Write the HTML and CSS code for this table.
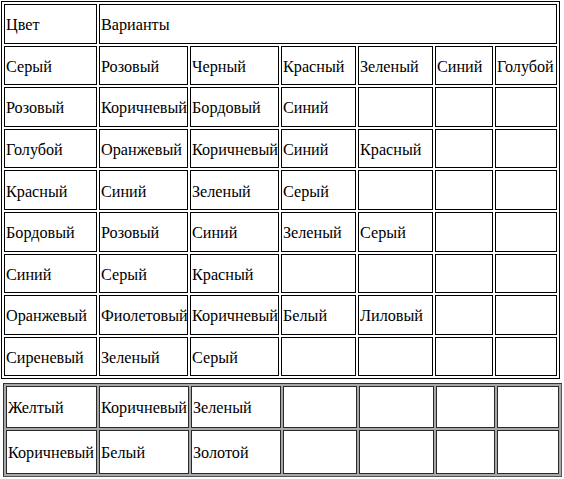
FILE: index.html
```html
<!DOCTYPE html>
<html lang="ru">
<head>
<meta charset="utf-8">
<link rel="stylesheet" href="styles.css">
</head>
<body>
<table class="grid main">
  <colgroup>
    <col class="c1"><col class="c2"><col class="c3"><col class="c4"><col class="c5"><col class="c6"><col class="c7">
  </colgroup>
  <tr><td>Цвет</td><td colspan="6">Варианты</td></tr>
  <tr><td>Серый</td><td>Розовый</td><td>Черный</td><td>Красный</td><td>Зеленый</td><td>Синий</td><td>Голубой</td></tr>
  <tr><td>Розовый</td><td>Коричневый</td><td>Бордовый</td><td>Синий</td><td></td><td></td><td></td></tr>
  <tr><td>Голубой</td><td>Оранжевый</td><td>Коричневый</td><td>Синий</td><td>Красный</td><td></td><td></td></tr>
  <tr><td>Красный</td><td>Синий</td><td>Зеленый</td><td>Серый</td><td></td><td></td><td></td></tr>
  <tr><td>Бордовый</td><td>Розовый</td><td>Синий</td><td>Зеленый</td><td>Серый</td><td></td><td></td></tr>
  <tr><td>Синий</td><td>Серый</td><td>Красный</td><td></td><td></td><td></td><td></td></tr>
  <tr><td>Оранжевый</td><td>Фиолетовый</td><td>Коричневый</td><td>Белый</td><td>Лиловый</td><td></td><td></td></tr>
  <tr><td>Сиреневый</td><td>Зеленый</td><td>Серый</td><td></td><td></td><td></td><td></td></tr>
</table>
<table class="grid extra">
  <colgroup>
    <col class="d1"><col class="d2"><col class="d3"><col class="d4"><col class="d5"><col class="d6"><col class="d7">
  </colgroup>
  <tr class="r1"><td>Желтый</td><td>Коричневый</td><td>Зеленый</td><td></td><td></td><td></td><td></td></tr>
  <tr class="r2"><td>Коричневый</td><td>Белый</td><td>Золотой</td><td></td><td></td><td></td><td></td></tr>
</table>
</body>
</html>
```
FILE: styles.css
```css
html, body {
  margin: 0;
  padding: 0;
  background: #fff;
}
body {
  font-family: "Liberation Serif", "Times New Roman", serif;
  font-size: 16.2px;
  color: #000;
}
.grid {
  table-layout: fixed;
  border-collapse: separate;
  border-spacing: 2px;
}
.grid td {
  font-family: "Liberation Serif", "Times New Roman", serif;
  font-size: 16.2px;
  padding: 4px 0 0 1px;
  white-space: nowrap;
  overflow: visible;
  vertical-align: middle;
  text-align: left;
  background: #fff;
}
.main {
  margin: 1px 0 0 1px;
  border: 1px solid #000;
  width: 559px;
}
.main td {
  border: 1px solid #000;
  height: 33.6px;
}
.main .c1 { width: 93px; }
.main .c2 { width: 89px; }
.main .c3 { width: 89px; }
.main .c4 { width: 75px; }
.main .c5 { width: 75px; }
.main .c6 { width: 58px; }
.main .c7 { width: 62px; }

.extra {
  margin: 4px 0 0 3px;
  border: 1px solid #333;
  border-right-color: #555;
  border-bottom-color: #555;
  background: #a8a8a8;
  width: 558px;
}
.extra td {
  border: 1px solid #2a2a2a;
  padding-top: 2px;
}
.extra .r1 td { height: 38px; }
.extra .r2 td { height: 40px; }
.extra .d1 { width: 91px; }
.extra .d2 { width: 90px; }
.extra .d3 { width: 90px; }
.extra .d4 { width: 74px; }
.extra .d5 { width: 75px; }
.extra .d6 { width: 59px; }
.extra .d7 { width: 62px; }
```
